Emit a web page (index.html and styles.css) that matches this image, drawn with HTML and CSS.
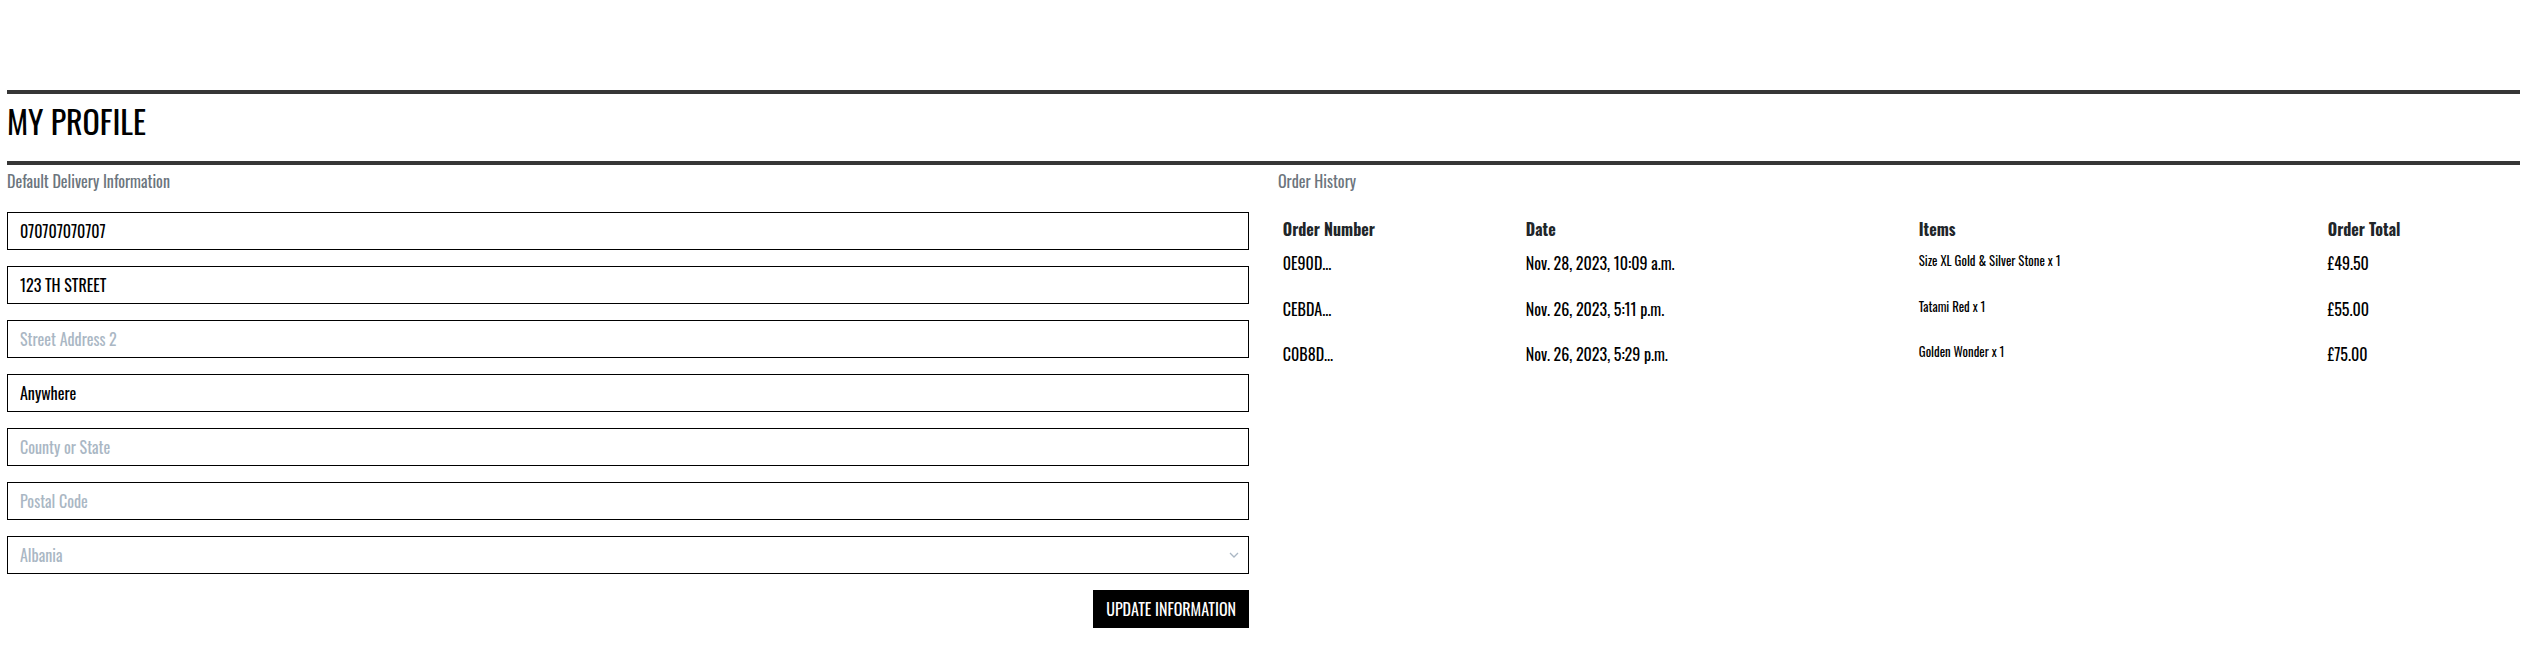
FILE: index.html
```html
<!DOCTYPE html>
<html lang="en">
<head>
    <meta charset="UTF-8">
    <meta name="viewport" content="width=device-width, initial-scale=1.0">
    <title>My Profile</title>
    <link rel="stylesheet" href="styles.css">
</head>
<body>
    <div class="page">
        <hr class="rule">
        <h2 class="pageTitle">My Profile</h2>
        <hr class="rule">
        <div class="profileRow">
            <div class="profileCol">
                <p class="muted">Default Delivery Information</p>
                <form class="profileForm">
                    <input class="field" type="text" value="070707070707" placeholder="Phone Number">
                    <input class="field" type="text" value="123 TH STREET" placeholder="Street Address 1">
                    <input class="field" type="text" value="" placeholder="Street Address 2">
                    <input class="field" type="text" value="Anywhere" placeholder="Town or City">
                    <input class="field" type="text" value="" placeholder="County or State">
                    <input class="field" type="text" value="" placeholder="Postal Code">
                    <div class="selectWrap">
                        <select class="field fieldSelect">
                            <option>Albania</option>
                        </select>
                        <svg class="chevron" width="10" height="6" viewBox="0 0 10 6">
                            <path d="M1 1l4 4 4-4" fill="none" stroke="#aab7c4" stroke-width="1.3"/>
                        </svg>
                    </div>
                    <div class="formActions">
                        <button class="btnBlack" type="button">Update Information</button>
                    </div>
                </form>
            </div>
            <div class="profileCol">
                <p class="muted">Order History</p>
                <table class="orderTable">
                    <thead>
                        <tr>
                            <th>Order Number</th>
                            <th>Date</th>
                            <th>Items</th>
                            <th>Order Total</th>
                        </tr>
                    </thead>
                    <tbody>
                        <tr>
                            <td>0E90D...</td>
                            <td>Nov. 28, 2023, 10:09 a.m.</td>
                            <td><ul class="itemList"><li>Size XL Gold &amp; Silver Stone x 1</li></ul></td>
                            <td>£49.50</td>
                        </tr>
                        <tr>
                            <td>CEBDA...</td>
                            <td>Nov. 26, 2023, 5:11 p.m.</td>
                            <td><ul class="itemList"><li>Tatami Red x 1</li></ul></td>
                            <td>£55.00</td>
                        </tr>
                        <tr>
                            <td>C0B8D...</td>
                            <td>Nov. 26, 2023, 5:29 p.m.</td>
                            <td><ul class="itemList"><li>Golden Wonder x 1</li></ul></td>
                            <td>£75.00</td>
                        </tr>
                    </tbody>
                </table>
            </div>
        </div>
    </div>
</body>
</html>
```
FILE: styles.css
```css
* {
    box-sizing: border-box;
}

body {
    margin: 0;
    font-family: "Oswald", "Open Sans", sans-serif;
    font-size: 16px;
    line-height: 1.5;
    color: #000;
    background-color: #fff;
}

.page {
    padding: 90px 4px 40px 7px;
}

.rule {
    height: 4px;
    margin: 0;
    border: 0;
    background-color: #363636;
}

.pageTitle {
    margin: 8px 0 21px;
    font-size: 32px;
    font-weight: 400;
    line-height: 1.2;
    text-transform: uppercase;
}

.profileRow {
    display: grid;
    grid-template-columns: 1fr 1fr;
    column-gap: 29px;
    margin-top: 4px;
}

.muted {
    margin: 0 0 19px;
    font-size: 16px;
    color: #6c757d;
}

.profileForm {
    display: flex;
    flex-direction: column;
    gap: 16px;
}

.field {
    display: block;
    width: 100%;
    height: 38px;
    padding: 6px 12px;
    font-family: inherit;
    font-size: 16px;
    line-height: 1.5;
    color: #000;
    background-color: #fff;
    border: 1px solid #000;
    border-radius: 0;
    outline: none;
}

.field::placeholder {
    color: #aab7c4;
}

.selectWrap {
    position: relative;
}

.fieldSelect {
    appearance: none;
    -webkit-appearance: none;
    color: #aab7c4;
}

.chevron {
    position: absolute;
    right: 10px;
    top: 16px;
}

.formActions {
    display: flex;
    justify-content: flex-end;
}

.btnBlack {
    padding: 6px 12px;
    font-family: inherit;
    font-size: 16px;
    line-height: 1.5;
    color: #fff;
    text-transform: uppercase;
    background-color: #000;
    border: 1px solid #000;
    border-radius: 0;
}

.orderTable {
    width: 100%;
    border-collapse: collapse;
    table-layout: fixed;
}

.orderTable th,
.orderTable td {
    padding: 4.8px;
    text-align: left;
    vertical-align: top;
}

.orderTable th {
    font-weight: 700;
    color: #212529;
}

.orderTable th:nth-child(1) {
    width: 243px;
}

.orderTable th:nth-child(2) {
    width: 393px;
}

.orderTable th:nth-child(3) {
    width: 409px;
}

.itemList {
    margin: 0 0 17px;
    padding: 0;
    list-style: none;
}

.itemList li {
    font-size: 12.8px;
    line-height: 19.2px;
}
```
